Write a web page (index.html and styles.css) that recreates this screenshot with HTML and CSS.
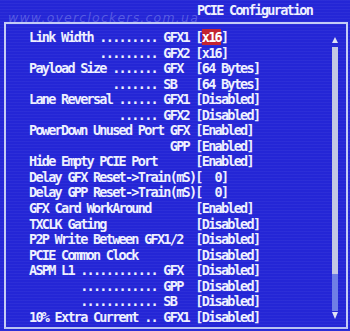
FILE: index.html
```html
<!DOCTYPE html>
<html lang="en">
  <head>
    <meta charset="UTF-8" />
    <meta name="viewport" content="width=device-width, initial-scale=1.0" />
    <title>PCIE Configuration</title>
    <link rel="stylesheet" href="styles.css">
  </head>
  <body>
    <header>
      <h1>PCIE Configuration</h1>
      <span class="mark">www.overclockers.com.ua</span>
    </header>

    <div class="frame">
      <div class="list">
        <div class="row">Link Width ......... GFX1 [<span class="sel">x16</span>]</div>
        <div class="row">           ......... GFX2 [x16]</div>
        <div class="row">Payload Size ....... GFX  [64 Bytes]</div>
        <div class="row">             ....... SB   [64 Bytes]</div>
        <div class="row">Lane Reversal ...... GFX1 [Disabled]</div>
        <div class="row">              ...... GFX2 [Disabled]</div>
        <div class="row">PowerDown Unused Port GFX [Enabled]</div>
        <div class="row">                      GPP [Enabled]</div>
        <div class="row">Hide Empty PCIE Port      [Enabled]</div>
        <div class="row">Delay GFX Reset-&gt;Train(mS)[  0]</div>
        <div class="row">Delay GPP Reset-&gt;Train(mS)[  0]</div>
        <div class="row">GFX Card WorkAround       [Enabled]</div>
        <div class="row">TXCLK Gating              [Disabled]</div>
        <div class="row">P2P Write Between GFX1/2  [Disabled]</div>
        <div class="row">PCIE Common Clock         [Disabled]</div>
        <div class="row">ASPM L1 ............ GFX  [Disabled]</div>
        <div class="row">        ............ GPP  [Disabled]</div>
        <div class="row">        ............ SB   [Disabled]</div>
        <div class="row">10% Extra Current .. GFX1 [Disabled]</div>
      </div>

      <div class="scroll">
        <div class="arrow up"></div>
        <div class="thumb"></div>
        <div class="track"></div>
        <div class="arrow down"></div>
      </div>
    </div>
  </body>
</html>
```

FILE: styles.css
```css
body {
  margin: 0;
  width: 350px;
  height: 331px;
  overflow: hidden;
  background-color: #2426d6;
  background-image: repeating-linear-gradient(to bottom, rgba(255, 255, 255, 0.04) 0 1px, transparent 1px 3px);
  color: #eef0ff;
  font-family: "DejaVu Sans Mono", "Liberation Mono", monospace;
  font-weight: bold;
  font-size: 13.5px;
  letter-spacing: -1.73px;
}
header {
  position: relative;
  height: 22px;
}
h1 {
  margin: 0;
  padding-left: 197px;
  font-size: 13.5px;
  line-height: 21px;
  font-weight: bold;
}
.mark {
  position: absolute;
  left: 8px;
  top: 10px;
  font-family: "DejaVu Sans", sans-serif;
  font-style: italic;
  font-weight: normal;
  font-size: 12.5px;
  letter-spacing: 1.2px;
  color: rgba(200, 210, 255, 0.3);
}

.frame {
  display: flex;
  margin: 0 2px 0 4px;
  height: 303px;
  border: 2px solid #c4ccf6;
  border-bottom-color: #b8c2f2;
}
.list {
  flex: 1;
  padding: 6px 0 0 23px;
}
.row {
  white-space: pre;
  line-height: 15.55px;
  height: 15.55px;
}
.sel {
  background-color: #c42430;
  color: #ffffff;
}

.scroll {
  display: flex;
  flex-direction: column;
  width: 6px;
  margin-right: 8px;
  padding: 13px 0 8px;
}
.arrow {
  width: 0;
  height: 0;
  border-left: 3px solid transparent;
  border-right: 3px solid transparent;
}
.arrow.up {
  border-bottom: 6px solid #dfe2f4;
  margin-bottom: 4px;
}
.arrow.down {
  border-top: 7px solid #dfe2f4;
  margin-top: 1px;
}
.thumb {
  height: 227px;
  background-color: #c4c8e4;
}
.track {
  flex: 1;
  background-color: #6f7ee6;
}
```
